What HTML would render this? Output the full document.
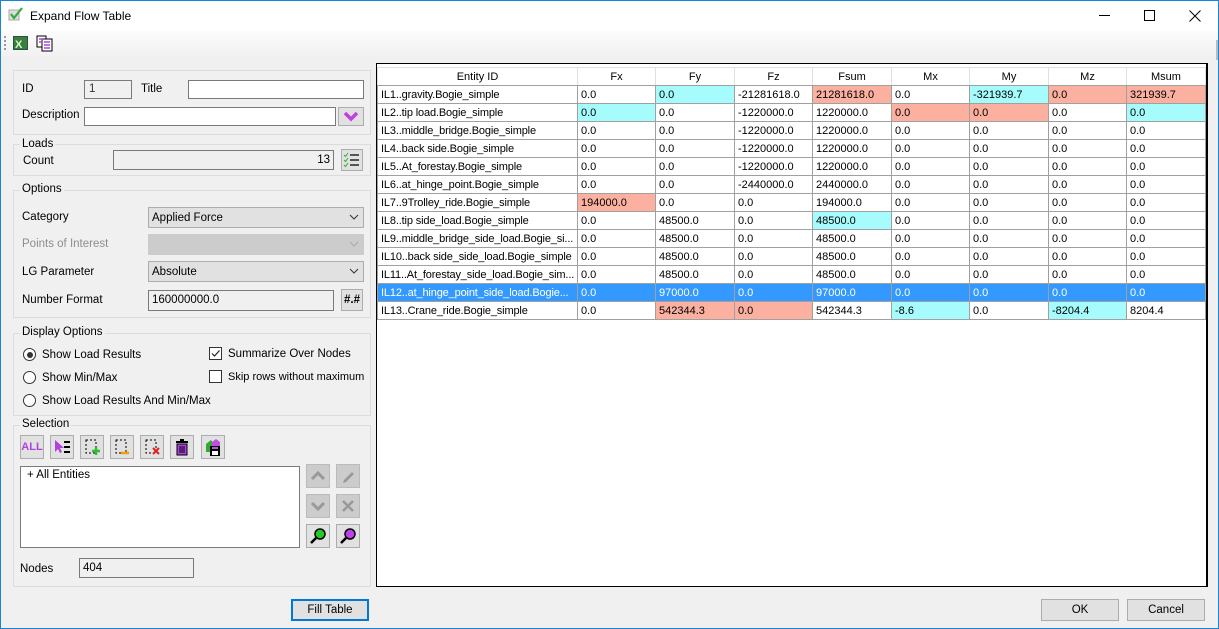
<!DOCTYPE html>
<html><head><meta charset="utf-8"><style>
*{box-sizing:border-box;margin:0;padding:0}
body{width:1219px;height:629px;overflow:hidden;background:#f0f0f0;font-family:"Liberation Sans",sans-serif;font-size:11.5px;color:#000;position:relative}
.a{position:absolute}
.win{position:absolute;left:0;top:0;width:1219px;height:629px;border:1px solid #1883d7}
.grp{position:absolute;border:1px solid #dcdcdc}
.gl{position:absolute;background:#f0f0f0;padding:0 2px;top:-8px;left:6px}
.tb{position:absolute;background:#fff;border:1px solid #7a7a7a}
.ro{position:absolute;background:#f0f0f0;border:1px solid #7a7a7a}
.cb{position:absolute;background:#e1e1e1;border:1px solid #adadad;padding-left:3px;line-height:20px}
.btn{position:absolute;background:#e1e1e1;border:1px solid #adadad;text-align:center}
.chev{position:absolute;right:4px;top:6px}
table{position:absolute;left:377px;top:67px;width:828px;border-collapse:collapse;table-layout:fixed;font-size:11px}
td{height:18px;border:1px solid #a0a0a0;padding:0 3px;white-space:nowrap;overflow:hidden;text-overflow:clip;line-height:16px}
td:first-child{letter-spacing:-0.15px}
th{height:18px;border:1px solid #e0e0e0;border-bottom-color:#a0a0a0;font-weight:normal;background:#fff;line-height:16px;overflow:hidden}
td{background:#fff}
.c{background:#a6fcfc}.s{background:#fbb0a0}
tr.sel td{background:#3399ff;color:#fff}
</style></head><body>
<div class="win"></div>
<div class="a" style="left:1px;top:1px;width:1217px;height:30px;background:#fff"></div>
<svg class="a" style="left:8px;top:7px" width="16" height="14"><rect x="1" y="3" width="10" height="10" fill="#ddd" stroke="#aaa"/><path d="M3 7 L6 11 L14 1" stroke="#3a3" stroke-width="2.2" fill="none"/></svg>
<div class="a" style="left:30px;top:9px;font-size:12px">Expand Flow Table</div>
<div class="a" style="left:1099px;top:15px;width:11px;height:1px;background:#000"></div>
<div class="a" style="left:1144px;top:10px;width:11px;height:11px;border:1px solid #000"></div>
<svg class="a" style="left:1189px;top:10px" width="12" height="12"><path d="M0.5 0.5l11 11M11.5 0.5l-11 11" stroke="#000" stroke-width="1"/></svg>
<div class="a" style="left:1px;top:31px;width:1217px;height:28px;background:linear-gradient(#fcfcfc,#f0f0f0)"></div>
<div class="a" style="left:4px;top:36px;width:2px;height:14px;border-left:2px dotted #999"></div>
<svg class="a" style="left:13px;top:36px" width="16" height="15"><rect x="0.5" y="0.5" width="14" height="13" fill="#3d7d3d" stroke="#254"/><text x="2" y="12" font-size="11" font-weight="bold" fill="#cfc" font-family="Liberation Sans">X</text></svg>
<svg class="a" style="left:36px;top:35px" width="17" height="17"><rect x="1" y="1" width="9" height="11" fill="#fff" stroke="#000"/><rect x="6" y="4" width="10" height="12" fill="#fff" stroke="#000"/><path d="M8 7h6M8 10h6M8 13h6M3 4h4M3 7h2" stroke="#b040e0" stroke-width="1.5"/></svg>
<div class="a" style="left:1216px;top:40px;width:2px;height:20px;background:#bbb"></div>

<div class="grp" style="left:13px;top:70px;width:358px;height:65px"></div>
<div class="a" style="left:22px;top:83px">ID</div>
<div class="ro" style="left:84px;top:80px;width:48px;height:19px;padding-left:4px;line-height:17px;color:#333">1</div>
<div class="a" style="left:141px;top:83px">Title</div>
<div class="tb" style="left:188px;top:80px;width:176px;height:19px"></div>
<div class="a" style="left:22px;top:109px">Description</div>
<div class="tb" style="left:84px;top:107px;width:252px;height:19px"></div>
<div class="btn" style="left:338px;top:107px;width:26px;height:19px"><svg width="16" height="12" style="margin-top:3px"><path d="M2 2 L8 8 L14 2" stroke="#c040e0" stroke-width="3.5" fill="none"/></svg></div>
<div class="grp" style="left:13px;top:144px;width:358px;height:32px"><div class="gl" style="top:-7px">Loads</div></div>
<div class="a" style="left:23px;top:155px">Count</div>
<div class="ro" style="left:113px;top:150px;width:221px;height:20px;text-align:right;padding-right:3px;line-height:18px">13</div>
<div class="btn" style="left:341px;top:149px;width:22px;height:22px"><svg width="18" height="16" style="margin-top:2px"><path d="M1 3l1.5 1.5L5 1M1 8l1.5 1.5L5 6M1 13l1.5 1.5L5 11" stroke="#3a3" fill="none"/><path d="M7 3h9M7 8h9M7 13h9" stroke="#000" stroke-width="1.3"/></svg></div>
<div class="grp" style="left:13px;top:190px;width:358px;height:128px"><div class="gl">Options</div></div>
<div class="a" style="left:22px;top:211px">Category</div>
<div class="cb" style="left:148px;top:207px;width:216px;height:21px">Applied Force<svg class="chev" width="10" height="6"><path d="M1 1l4 4 4-4" stroke="#333" fill="none"/></svg></div>
<div class="a" style="left:22px;top:238px;color:#8d8d8d">Points of Interest</div>
<div class="cb" style="left:148px;top:234px;width:216px;height:21px;background:#ccc;border-color:#ccc"><svg class="chev" width="10" height="6"><path d="M1 1l4 4 4-4" stroke="#aaa" fill="none"/></svg></div>
<div class="a" style="left:22px;top:266px">LG Parameter</div>
<div class="cb" style="left:148px;top:261px;width:216px;height:21px">Absolute<svg class="chev" width="10" height="6"><path d="M1 1l4 4 4-4" stroke="#333" fill="none"/></svg></div>
<div class="a" style="left:22px;top:294px">Number Format</div>
<div class="ro" style="left:148px;top:290px;width:186px;height:21px;padding-left:3px;line-height:19px">160000000.0</div>
<div class="btn" style="left:341px;top:289px;width:22px;height:22px;font-weight:bold;line-height:20px">#.#</div>
<div class="grp" style="left:13px;top:333px;width:358px;height:83px"><div class="gl">Display Options</div></div>
<div class="a" style="left:23px;top:348px;width:13px;height:13px;border:1px solid #333;border-radius:50%;background:#fff"><div style="margin:2.5px;width:6px;height:6px;border-radius:50%;background:#333"></div></div>
<div class="a" style="left:42px;top:349px">Show Load Results</div>
<div class="a" style="left:23px;top:371px;width:13px;height:13px;border:1px solid #333;border-radius:50%;background:#fff"></div>
<div class="a" style="left:42px;top:372px">Show Min/Max</div>
<div class="a" style="left:23px;top:394px;width:13px;height:13px;border:1px solid #333;border-radius:50%;background:#fff"></div>
<div class="a" style="left:42px;top:395px">Show Load Results And Min/Max</div>
<div class="a" style="left:209px;top:347px;width:13px;height:13px;border:1px solid #333;background:#fff"><svg width="11" height="11" style="display:block"><path d="M2 5.5l2.5 2.5L9.5 2.5" stroke="#222" fill="none" stroke-width="1.2"/></svg></div>
<div class="a" style="left:228px;top:348px">Summarize Over Nodes</div>
<div class="a" style="left:209px;top:370px;width:13px;height:13px;border:1px solid #333;background:#fff"></div>
<div class="a" style="left:228px;top:371px;font-size:11px">Skip rows without maximum</div>
<div class="grp" style="left:13px;top:425px;width:358px;height:162px"><div class="gl">Selection</div></div>
<div class="btn" style="left:20px;top:435px;width:24px;height:24px;color:#b040e0;font-weight:bold;font-size:11px;line-height:22px">ALL</div>
<div class="btn" style="left:50px;top:435px;width:24px;height:24px"><svg width="20" height="18" style="margin-top:2px"><path d="M3 2v12l3-3 2 4 2-1-2-4h4z" fill="#b040e0"/><path d="M12 4h6M12 9h6M12 14h6" stroke="#000" stroke-width="2"/></svg></div>
<div class="btn" style="left:80px;top:435px;width:24px;height:24px"><svg width="18" height="18" style="margin-top:2px"><rect x="3" y="2" width="10" height="13" fill="none" stroke="#000" stroke-dasharray="2 2"/><path d="M13 9v8M9 13h8" stroke="#3b3" stroke-width="2.5"/></svg></div>
<div class="btn" style="left:110px;top:435px;width:24px;height:24px"><svg width="18" height="18" style="margin-top:2px"><rect x="3" y="2" width="10" height="13" fill="none" stroke="#000" stroke-dasharray="2 2"/><path d="M8 15h8" stroke="#f0a000" stroke-width="2.5"/></svg></div>
<div class="btn" style="left:140px;top:435px;width:24px;height:24px"><svg width="18" height="18" style="margin-top:2px"><rect x="3" y="2" width="10" height="13" fill="none" stroke="#000" stroke-dasharray="2 2"/><path d="M10 10l6 6M16 10l-6 6" stroke="#e02020" stroke-width="2"/></svg></div>
<div class="btn" style="left:170px;top:435px;width:24px;height:24px"><svg width="16" height="18" style="margin-top:2px"><rect x="2" y="3" width="12" height="2" fill="#000"/><rect x="6" y="1" width="4" height="2" fill="#000"/><rect x="3" y="6" width="10" height="11" fill="#b040e0" stroke="#000"/><path d="M6 8v7M8 8v7M10 8v7" stroke="#000"/></svg></div>
<div class="btn" style="left:201px;top:435px;width:24px;height:24px"><svg width="18" height="18" style="margin-top:2px"><path d="M2 6l5-4 3 4v8H2z" fill="#3a3"/><path d="M8 4l4-3 4 3v5H8z" fill="#c050e0"/><rect x="6" y="8" width="10" height="10" fill="#000"/><rect x="8" y="13" width="6" height="4" fill="#fff"/><rect x="8" y="9" width="6" height="2" fill="#c050e0"/></svg></div>
<div class="tb" style="left:20px;top:466px;width:280px;height:82px;padding:2px 6px">+ All Entities</div>
<div class="btn" style="left:306px;top:464px;width:24px;height:24px;background:#ccc;border-color:#bbb"><svg width="16" height="12" style="margin-top:5px"><path d="M2 9l6-6 6 6" stroke="#999" stroke-width="3" fill="none"/></svg></div>
<div class="btn" style="left:336px;top:464px;width:24px;height:24px;background:#ccc;border-color:#bbb"><svg width="14" height="14" style="margin-top:4px"><path d="M3 11l8-8 2 2-8 8-3 1z" fill="#999"/></svg></div>
<div class="btn" style="left:306px;top:494px;width:24px;height:24px;background:#ccc;border-color:#bbb"><svg width="16" height="12" style="margin-top:5px"><path d="M2 3l6 6 6-6" stroke="#999" stroke-width="3" fill="none"/></svg></div>
<div class="btn" style="left:336px;top:494px;width:24px;height:24px;background:#ccc;border-color:#bbb"><svg width="14" height="14" style="margin-top:4px"><path d="M2 2l10 10M12 2L2 12" stroke="#999" stroke-width="2.5"/></svg></div>
<div class="btn" style="left:306px;top:524px;width:24px;height:24px"><svg width="18" height="18" style="margin-top:2px"><circle cx="11" cy="7" r="5" fill="#2c2" stroke="#000" stroke-width="1.5"/><path d="M7 11l-5 5" stroke="#000" stroke-width="2.5"/></svg></div>
<div class="btn" style="left:336px;top:524px;width:24px;height:24px"><svg width="18" height="18" style="margin-top:2px"><circle cx="11" cy="7" r="5" fill="#c040f0" stroke="#000" stroke-width="1.5"/><path d="M7 11l-5 5" stroke="#000" stroke-width="2.5"/></svg></div>
<div class="a" style="left:20px;top:563px">Nodes</div>
<div class="ro" style="left:79px;top:558px;width:115px;height:20px;padding-left:3px;line-height:18px">404</div>
<div class="btn" style="left:291px;top:599px;width:78px;height:22px;border:2px solid #0078d7;line-height:18px">Fill Table</div>
<div class="btn" style="left:1041px;top:599px;width:78px;height:22px;line-height:20px">OK</div>
<div class="btn" style="left:1127px;top:599px;width:78px;height:22px;line-height:20px">Cancel</div>
<div class="a" style="left:376px;top:63px;width:832px;height:524px;background:#fff;border:1px solid #000;border-right:2px solid #000"></div>
<table>
<colgroup><col style="width:200px"><col style="width:78px"><col style="width:79px"><col style="width:78px"><col style="width:79px"><col style="width:78px"><col style="width:79px"><col style="width:78px"><col style="width:79px"></colgroup>
<tr><th>Entity ID</th><th>Fx</th><th>Fy</th><th>Fz</th><th>Fsum</th><th>Mx</th><th>My</th><th>Mz</th><th>Msum</th></tr>
<tr><td>IL1..gravity.Bogie_simple</td><td>0.0</td><td class="c">0.0</td><td>-21281618.0</td><td class="s">21281618.0</td><td>0.0</td><td class="c">-321939.7</td><td class="s">0.0</td><td class="s">321939.7</td></tr>
<tr><td>IL2..tip load.Bogie_simple</td><td class="c">0.0</td><td>0.0</td><td>-1220000.0</td><td>1220000.0</td><td class="s">0.0</td><td class="s">0.0</td><td>0.0</td><td class="c">0.0</td></tr>
<tr><td>IL3..middle_bridge.Bogie_simple</td><td>0.0</td><td>0.0</td><td>-1220000.0</td><td>1220000.0</td><td>0.0</td><td>0.0</td><td>0.0</td><td>0.0</td></tr>
<tr><td>IL4..back side.Bogie_simple</td><td>0.0</td><td>0.0</td><td>-1220000.0</td><td>1220000.0</td><td>0.0</td><td>0.0</td><td>0.0</td><td>0.0</td></tr>
<tr><td>IL5..At_forestay.Bogie_simple</td><td>0.0</td><td>0.0</td><td>-1220000.0</td><td>1220000.0</td><td>0.0</td><td>0.0</td><td>0.0</td><td>0.0</td></tr>
<tr><td>IL6..at_hinge_point.Bogie_simple</td><td>0.0</td><td>0.0</td><td>-2440000.0</td><td>2440000.0</td><td>0.0</td><td>0.0</td><td>0.0</td><td>0.0</td></tr>
<tr><td>IL7..9Trolley_ride.Bogie_simple</td><td class="s">194000.0</td><td>0.0</td><td>0.0</td><td>194000.0</td><td>0.0</td><td>0.0</td><td>0.0</td><td>0.0</td></tr>
<tr><td>IL8..tip side_load.Bogie_simple</td><td>0.0</td><td>48500.0</td><td>0.0</td><td class="c">48500.0</td><td>0.0</td><td>0.0</td><td>0.0</td><td>0.0</td></tr>
<tr><td>IL9..middle_bridge_side_load.Bogie_si...</td><td>0.0</td><td>48500.0</td><td>0.0</td><td>48500.0</td><td>0.0</td><td>0.0</td><td>0.0</td><td>0.0</td></tr>
<tr><td>IL10..back side_side_load.Bogie_simple</td><td>0.0</td><td>48500.0</td><td>0.0</td><td>48500.0</td><td>0.0</td><td>0.0</td><td>0.0</td><td>0.0</td></tr>
<tr><td>IL11..At_forestay_side_load.Bogie_sim...</td><td>0.0</td><td>48500.0</td><td>0.0</td><td>48500.0</td><td>0.0</td><td>0.0</td><td>0.0</td><td>0.0</td></tr>
<tr class="sel"><td>IL12..at_hinge_point_side_load.Bogie...</td><td>0.0</td><td>97000.0</td><td>0.0</td><td>97000.0</td><td>0.0</td><td>0.0</td><td>0.0</td><td>0.0</td></tr>
<tr><td>IL13..Crane_ride.Bogie_simple</td><td>0.0</td><td class="s">542344.3</td><td class="s">0.0</td><td>542344.3</td><td class="c">-8.6</td><td>0.0</td><td class="c">-8204.4</td><td>8204.4</td></tr>
</table>
</body></html>
